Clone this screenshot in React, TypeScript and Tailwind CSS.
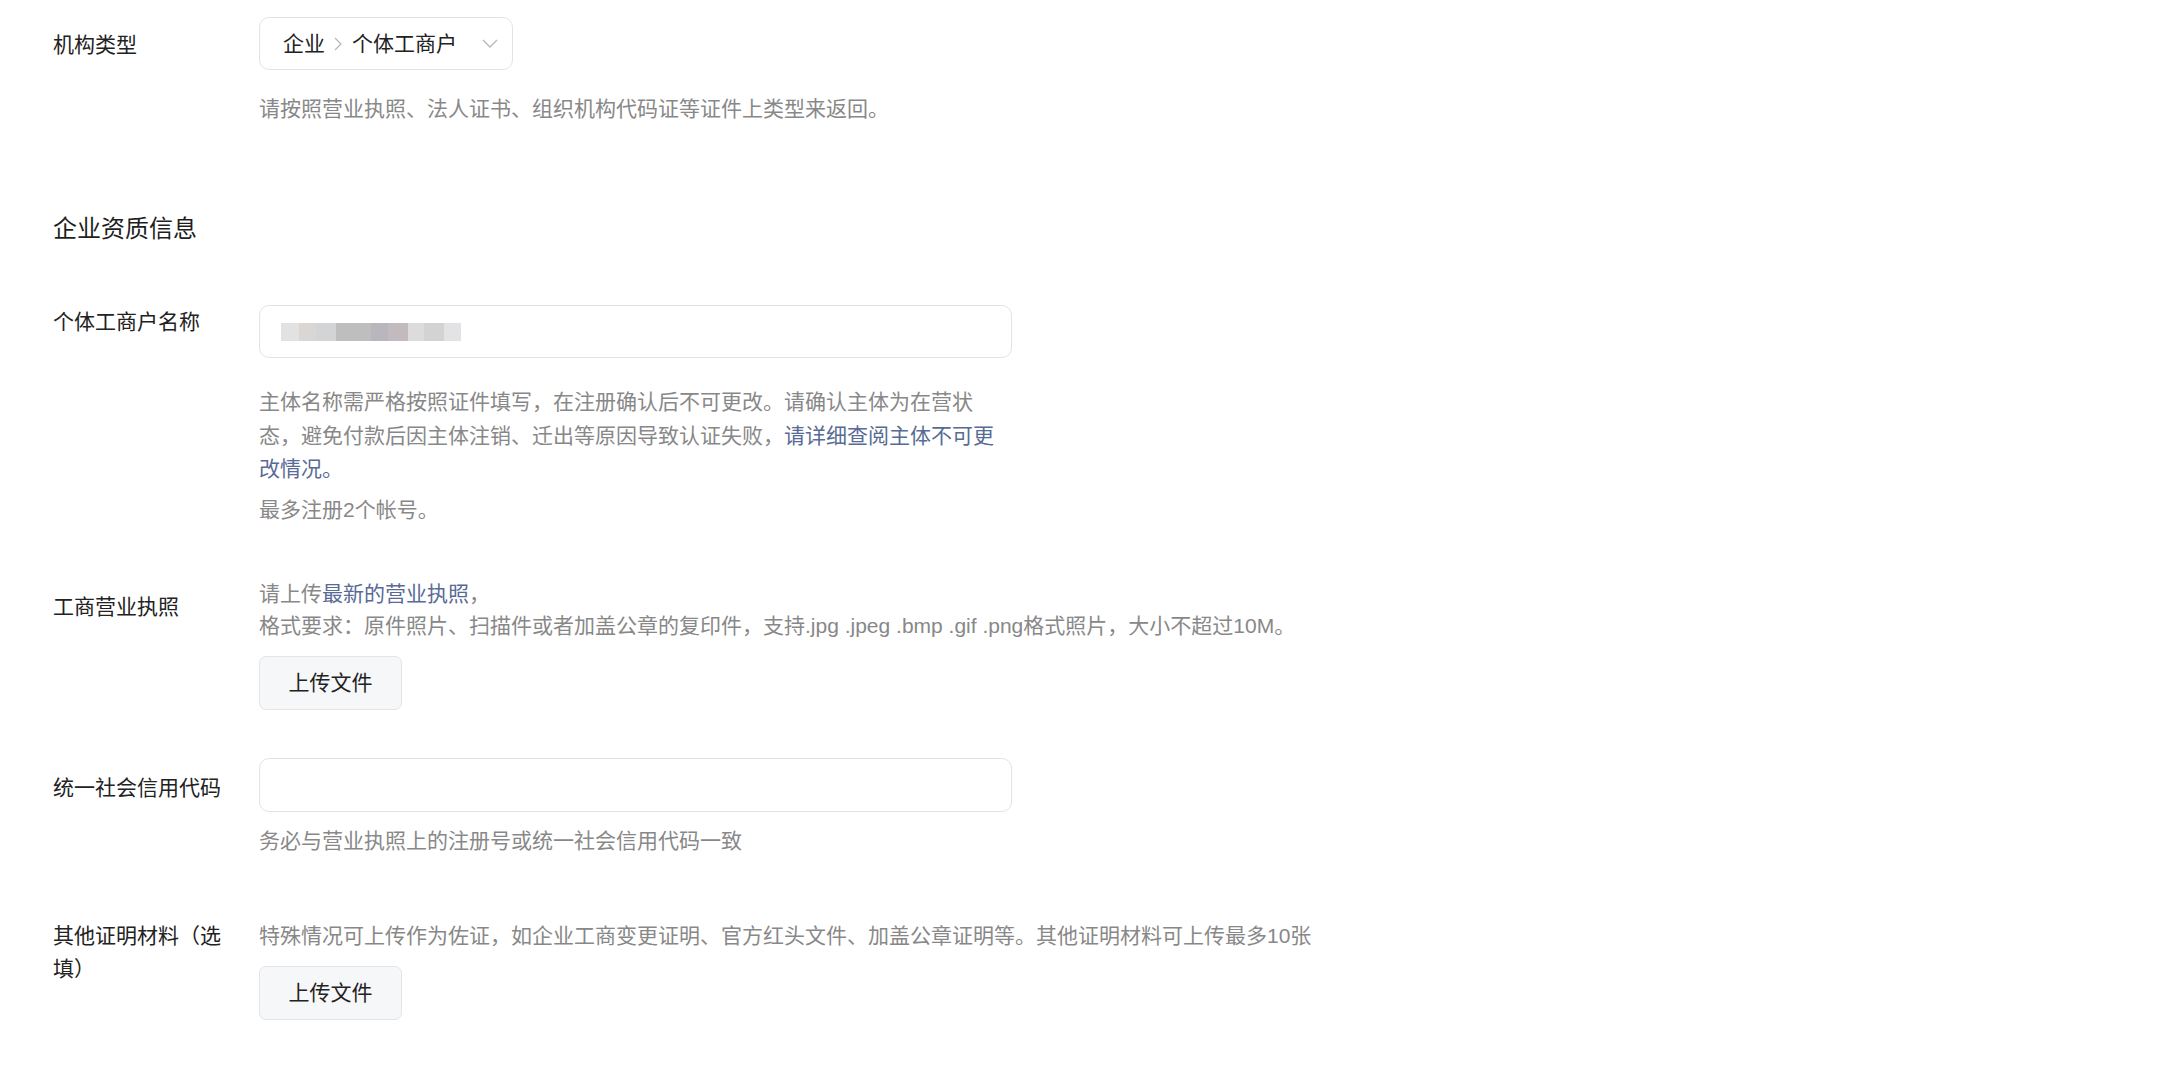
import React from "react";

const font = { fontFamily: '"Liberation Sans", "Noto Sans CJK SC", sans-serif' };

function Label({ children, className = "" }: { children: React.ReactNode; className?: string }) {
  return (
    <div className={`w-[206px] shrink-0 pr-[26px] ${className}`}>
      <div className="w-[180px] text-[21px] leading-[33px] text-[#222]">{children}</div>
    </div>
  );
}

function UploadButton() {
  return (
    <button className="h-[54px] w-[143px] rounded-[7px] border border-[#e4e4e6] bg-[#f6f7f8] text-[21px] text-[#222]">
      上传文件
    </button>
  );
}

// pixelated placeholder for the masked company name
const blurBlocks = [
  { w: 18, c: "#e2e2e2" },
  { w: 17, c: "#d9d6d4" },
  { w: 20, c: "#d2d4d6" },
  { w: 35, c: "#bebebe" },
  { w: 17, c: "#b9b7bd" },
  { w: 20, c: "#c2babe" },
  { w: 16, c: "#dcdcdc" },
  { w: 20, c: "#d3d3d3" },
  { w: 17, c: "#e3e3e5" },
];

export default function App() {
  return (
    <div className="min-h-[1071px] w-full bg-white pl-[53px]" style={font}>
      {/* 机构类型 */}
      <div className="flex pt-[17px]">
        <Label className="pt-[11px]">机构类型</Label>
        <div className="flex flex-col">
          <div className="flex h-[53px] w-[254px] items-center rounded-[10px] border border-[#e3e3e3] pl-[23px] pr-[14px] text-[21px] text-[#222]">
            <span>企业</span>
            <svg width="8" height="14" viewBox="0 0 8 14" className="ml-[9px] mr-[10px]">
              <polyline points="1,1 7,7 1,13" fill="none" stroke="#b5b5b5" strokeWidth="1.2" />
            </svg>
            <span>个体工商户</span>
            <svg width="16" height="9" viewBox="0 0 16 9" className="ml-auto">
              <polyline points="1,1 8,8 15,1" fill="none" stroke="#b8b8b8" strokeWidth="1.3" />
            </svg>
          </div>
          <p className="mt-[22px] text-[21px] leading-[33px] text-[#888]">
            请按照营业执照、法人证书、组织机构代码证等证件上类型来返回。
          </p>
        </div>
      </div>

      <h2 className="mt-[86px] text-[24px] font-normal leading-[36px] text-[#1f1f1f]">企业资质信息</h2>

      {/* 个体工商户名称 */}
      <div className="mt-[58px] flex">
        <Label>个体工商户名称</Label>
        <div className="flex w-[753px] flex-col">
          <div className="flex h-[53px] items-center rounded-[10px] border border-[#e3e3e3] pl-[21px]">
            <div className="flex h-[18px]">
              {blurBlocks.map((b, i) => (
                <div key={i} className="h-full" style={{ width: b.w, backgroundColor: b.c }} />
              ))}
            </div>
          </div>
          <p className="mt-[27px] text-[21px] leading-[33.5px] text-[#888]">
            主体名称需严格按照证件填写，在注册确认后不可更改。请确认主体为在营状态，避免付款后因主体注销、迁出等原因导致认证失败，
            <span className="text-[#576b95]">请详细查阅主体不可更改情况。</span>
          </p>
          <p className="mt-[7px] text-[21px] leading-[33px] text-[#888]">最多注册2个帐号。</p>
        </div>
      </div>

      {/* 工商营业执照 */}
      <div className="mt-[52px] flex">
        <Label className="pt-[12px]">工商营业执照</Label>
        <div className="flex flex-col items-start">
          <p className="text-[21px] leading-[32px] text-[#888]">
            请上传<span className="text-[#576b95]">最新的营业执照</span>，
          </p>
          <p className="text-[21px] leading-[32px] text-[#888]">
            格式要求：原件照片、扫描件或者加盖公章的复印件，支持.jpg .jpeg .bmp .gif .png格式照片，大小不超过10M。
          </p>
          <div className="mt-[14px]">
            <UploadButton />
          </div>
        </div>
      </div>

      {/* 统一社会信用代码 */}
      <div className="mt-[48px] flex">
        <Label className="pt-[13px]">统一社会信用代码</Label>
        <div className="flex w-[753px] flex-col">
          <div className="h-[54px] rounded-[10px] border border-[#e3e3e3]" />
          <p className="mt-[12px] text-[21px] leading-[33px] text-[#888]">务必与营业执照上的注册号或统一社会信用代码一致</p>
        </div>
      </div>

      {/* 其他证明材料 */}
      <div className="mt-[62px] flex">
        <Label>其他证明材料（选填）</Label>
        <div className="flex flex-col items-start">
          <p className="text-[21px] leading-[33px] text-[#888]">
            特殊情况可上传作为佐证，如企业工商变更证明、官方红头文件、加盖公章证明等。其他证明材料可上传最多10张
          </p>
          <div className="mt-[14px]">
            <UploadButton />
          </div>
        </div>
      </div>
    </div>
  );
}
